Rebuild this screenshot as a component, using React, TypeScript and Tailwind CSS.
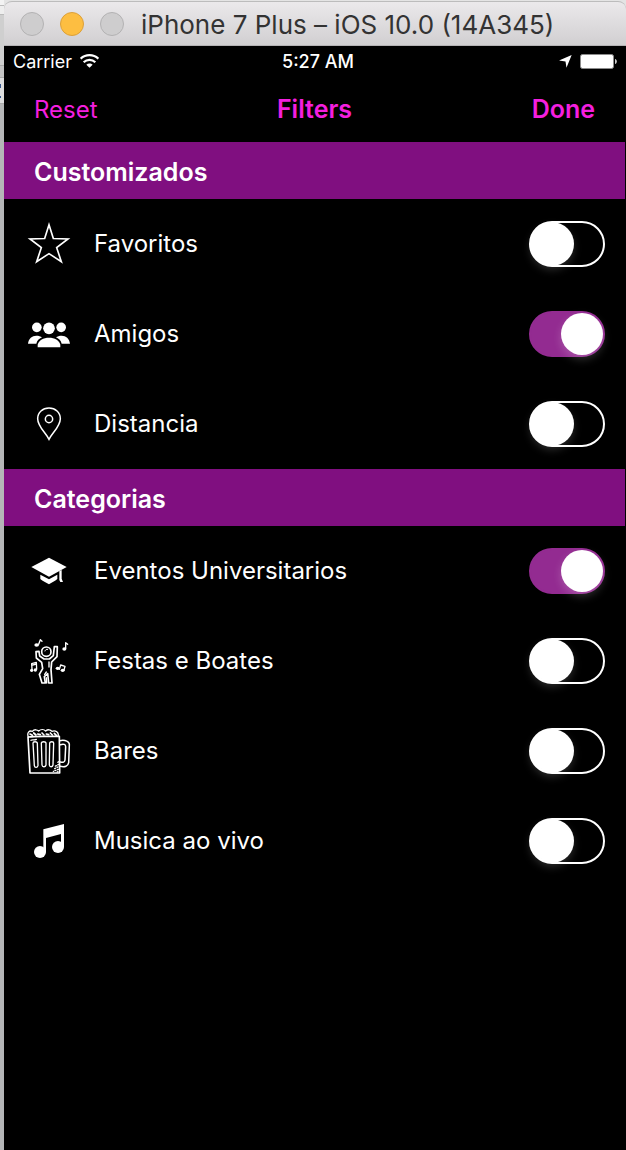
import { useState, type ReactNode } from 'react';

function StarIcon() {
  return (
    <svg viewBox="81 60 132 144" className="h-12 w-11" fill="none" stroke="#fff" strokeWidth="5" strokeLinejoin="miter" aria-hidden="true">
      <path d="M147 74 L160 115.500 L204 117 L170 143 L184 185 L147 161 L110 185 L124 143 L90 117 L134 115.500 Z" />
    </svg>
  );
}

function FriendsIcon() {
  return (
    <svg viewBox="81 330 132 144" className="h-12 w-11" fill="#fff" aria-hidden="true">
      <circle cx="147" cy="385" r="17.500" />
      <circle cx="110.500" cy="382" r="14.500" />
      <circle cx="183.500" cy="382" r="14.500" />
      <path d="M84 431 C86 415 96 407 109 407 C116 407 122 409 126 412 C117 416 111 422 109 431 Z" />
      <path d="M210 431 C208 415 198 407 185 407 C178 407 172 409 168 412 C177 416 183 422 185 431 Z" />
      <path d="M113 442 V434 C117 420 130 413 147 413 C164 413 177 420 181 434 V442 Z" />
    </svg>
  );
}

function PinIcon() {
  return (
    <svg viewBox="81 600 132 144" className="h-12 w-11" fill="none" stroke="#fff" strokeWidth="4.500" aria-hidden="true">
      <path d="M147 718 C137 698 113 679 113 656 C113 637 128 624 147 624 C166 624 181 637 181 656 C181 679 157 698 147 718 Z" />
      <circle cx="147" cy="657" r="11" />
    </svg>
  );
}

function GraduationIcon() {
  return (
    <svg viewBox="81 21 132 144" className="h-12 w-11" fill="#fff" aria-hidden="true">
      <path d="M147 53 L200 81 L147 110 L94 81 Z" />
      <path d="M121 104 L147 118 L172 104 V117 C165 123 155 128 147 133 C138 128 128 123 121 117 Z" />
      <path d="M178 93 L185 90 V116 L189 126 H181 L178 120 Z" />
    </svg>
  );
}

function DancerIcon() {
  return (
    <svg viewBox="81 291 132 144" className="h-12 w-11" fill="none" stroke="#fff" strokeWidth="5" strokeLinejoin="round" strokeLinecap="round" aria-hidden="true">
      <circle cx="139" cy="335" r="14" />
      <path d="M135 333 C136 329 139 327 143 328" strokeWidth="3" />
      <path d="M108 335 L117 334 L119 348 L132 357 H148 L160 347 L163 320 L172 320 L171 350 L155 366 L153 389 L156 429 H146 L143 401 L133 410 L136 429 H126 L118 403 L128 386 L125 367 L109 354 Z" />
      <path d="M147 366 V381 M134 403 L139 396 M139 413 L140 429" strokeWidth="4" />
      <path d="M116 313 L121 299 L126 304 M197 326 V308 L203 313 M96 387 L95 371 L109 367 L110 388 M95 376 L109 372 M178 388 L182 375 L195 379 L192 390" strokeWidth="4" />
      <g fill="#fff" stroke="none">
        <ellipse cx="110" cy="315" rx="7" ry="5" />
        <ellipse cx="193" cy="327" rx="6" ry="5" />
        <ellipse cx="95" cy="391" rx="5" ry="5" />
        <ellipse cx="106" cy="390" rx="5" ry="5" />
        <ellipse cx="173" cy="385" rx="6" ry="5" />
        <ellipse cx="188" cy="391" rx="6" ry="5" />
      </g>
    </svg>
  );
}

function BeerIcon() {
  return (
    <svg viewBox="81 51 132 144" className="h-12 w-11" fill="none" stroke="#fff" strokeWidth="5" strokeLinejoin="round" strokeLinecap="round" aria-hidden="true">
      <path d="M85 80 C80 69 88 60 97 64 C103 57 112 59 116 63 C123 57 132 58 137 63 C144 57 152 59 156 64 C166 59 178 68 174 79" strokeWidth="4" />
      <path d="M90 72 L97 76 M101 69 L108 75 M113 72 L121 74 M126 69 L132 75 M139 72 L146 74 M151 69 L157 75 M163 70 L169 76" strokeWidth="5" />
      <path d="M84 81 C113 77 145 80 178 79 L179 189 H90 Z" />
      <path d="M93 91 C98 87 102 92 109 88" strokeWidth="4" />
      <path d="M99 99 C99 94 111 94 112 99 L114 167 C112 174 104 174 103 167 Z M124 99 C125 94 137 94 138 99 V165 C136 172 127 172 126 165 Z M149 99 C150 94 161 94 161 99 L159 165 C157 172 149 172 148 165 Z" strokeWidth="4" />
      <path d="M179 92 C196 89 209 94 208 105 L206 158 C204 169 195 172 180 169 M181 104 C191 101 197 103 197 110 L195 150 C194 157 189 158 181 156" strokeWidth="4.500" />
      <path d="M176 155 L170 160 M176 163 L165 169 M174 171 L162 177 M175 178 L160 184 M174 185 L169 187" strokeWidth="4" strokeDasharray="3 5" />
    </svg>
  );
}

function MusicIcon() {
  return (
    <svg viewBox="81 321 132 144" className="h-12 w-11" fill="#fff" aria-hidden="true">
      <path d="M130 358 L192 342 V411 H183 V372 L138 384 V427 H130 Z" />
      <circle cx="120" cy="426" r="18" />
      <circle cx="174" cy="411" r="18" />
    </svg>
  );
}

function WifiIcon() {
  return (
    <svg viewBox="0 0 57 42" className="h-3.5 w-[19px]" fill="none" stroke="#fff" strokeWidth="6.500" aria-label="Wi-Fi">
      <path d="M2 14 C17 0 40 0 55 14 M11 25 C21 15 36 15 46 25" />
      <path d="M28.500 41 L19 32 C24 27 33 27 38 32 Z" fill="#fff" stroke="none" />
    </svg>
  );
}

function LocationIcon() {
  return (
    <svg viewBox="0 0 40 40" className="size-[13px]" fill="#fff" aria-label="Location">
      <path d="M39 0 L23 39 L20 20 L0 17 Z" />
    </svg>
  );
}

function BatteryIcon() {
  return (
    <svg viewBox="0 0 37 15" className="h-[15px] w-[37px]" aria-label="Battery full">
      <rect x="0.500" y="0.500" width="33" height="14" rx="2" fill="#fff" stroke="#8b8b8b" />
      <path d="M35 5 C37.500 5.500 37.500 9.500 35 10 Z" fill="#ccc" />
    </svg>
  );
}

type Filter = { id: string; label: string; icon: ReactNode; on: boolean };

const custom: Filter[] = [
  { id: 'favoritos', label: 'Favoritos', icon: <StarIcon />, on: false },
  { id: 'amigos', label: 'Amigos', icon: <FriendsIcon />, on: true },
  { id: 'distancia', label: 'Distancia', icon: <PinIcon />, on: false },
];

const categories: Filter[] = [
  { id: 'universitarios', label: 'Eventos Universitarios', icon: <GraduationIcon />, on: true },
  { id: 'festas', label: 'Festas e Boates', icon: <DancerIcon />, on: false },
  { id: 'bares', label: 'Bares', icon: <BeerIcon />, on: false },
  { id: 'musica', label: 'Musica ao vivo', icon: <MusicIcon />, on: false },
];

function FilterRow({ filter }: { filter: Filter }) {
  const [on, setOn] = useState(filter.on);
  return (
    <li className="flex h-[90px] items-center pr-5 pl-[23px]">
      {filter.icon}
      <label htmlFor={filter.id} className="ml-[23px] flex-1 text-2xl">
        {filter.label}
      </label>
      <input
        id={filter.id}
        type="checkbox"
        role="switch"
        checked={on}
        onChange={(e) => setOn(e.target.checked)}
        className="h-[46px] w-[76px] cursor-pointer appearance-none rounded-full border-2 border-white bg-black before:block before:size-[42px] before:rounded-full before:bg-white before:shadow-[0_0_0_1px_#fff,0_4px_10px_rgba(255,255,255,0.2)] checked:border-[#932b91] checked:bg-[#932b91] checked:before:ml-[30px] checked:before:shadow-[0_4px_10px_rgba(255,255,255,0.2)]"
      />
    </li>
  );
}

function Section({ title, filters }: { title: string; filters: Filter[] }) {
  return (
    <section>
      <h2 className="flex h-[57px] items-center bg-[#800f80] pt-1 pl-[30px] text-[25px] font-semibold">{title}</h2>
      <ul>
        {filters.map((f) => (
          <FilterRow key={f.id} filter={f} />
        ))}
      </ul>
    </section>
  );
}

export default function App() {
  return (
    <div className="flex min-h-screen bg-[#e4e4e4] font-[Inter,'Liberation_Sans',sans-serif] text-white">
      <div className="flex w-1 flex-col bg-[#b5b6b7]" aria-hidden="true">
        <div className="h-[5px] bg-[#f3f3f3]" />
        <div className="h-2.5 border-y border-[#bbb] bg-[#eee]" />
        <div className="h-[50px] bg-[#cfcfcf]" />
        <div className="h-3 border-t border-[#aaa] bg-[#c4c4c4]" />
        <div className="flex h-[27px] flex-col justify-center gap-2 border-y border-[#aaa] bg-[#ddd]">
          <div className="h-1 w-px bg-[#39588f]" />
          <div className="h-0.5 w-px bg-[#39588f]" />
        </div>
      </div>
      <div className="flex flex-1 flex-col pt-px">
        <header className="flex h-[45px] items-center rounded-t-lg border-t border-b border-t-[#bcbcbc] border-b-[#b5b3b5] bg-linear-to-b from-[#ebe9eb] to-[#d1cfd1] pl-4">
          <div className="flex gap-4">
            <button type="button" aria-label="Close" className="size-6 rounded-full border border-[#b3b2b3] bg-[#cecdce]" />
            <button type="button" aria-label="Minimize" className="size-6 rounded-full border border-[#dca03a] bg-[#fdbe41]" />
            <button type="button" aria-label="Zoom" className="size-6 rounded-full border border-[#b3b2b3] bg-[#cecdce]" />
          </div>
          <h1 className="ml-[17px] pt-0.5 text-[26px] whitespace-nowrap text-[#333]">iPhone 7 Plus – iOS 10.0 (14A345)</h1>
        </header>
        <main className="flex-1 bg-black pr-px">
          <div className="grid h-[30px] grid-cols-[35%_1fr_34%] items-center pr-2 pl-[9px] text-[18px]">
            <div className="flex items-center gap-2">
              <span>Carrier</span>
              <WifiIcon />
            </div>
            <span className="text-center font-medium">5:27 AM</span>
            <div className="flex items-center justify-end gap-2">
              <LocationIcon />
              <BatteryIcon />
            </div>
          </div>
          <nav className="grid h-[66px] grid-cols-3 items-center px-[30px] pt-0.5 text-[25px] text-[#f41fdf]">
            <button type="button" className="justify-self-start text-2xl">Reset</button>
            <h2 className="text-center font-semibold">Filters</h2>
            <button type="button" className="justify-self-end font-semibold">Done</button>
          </nav>
          <Section title="Customizados" filters={custom} />
          <Section title="Categorias" filters={categories} />
        </main>
      </div>
    </div>
  );
}
